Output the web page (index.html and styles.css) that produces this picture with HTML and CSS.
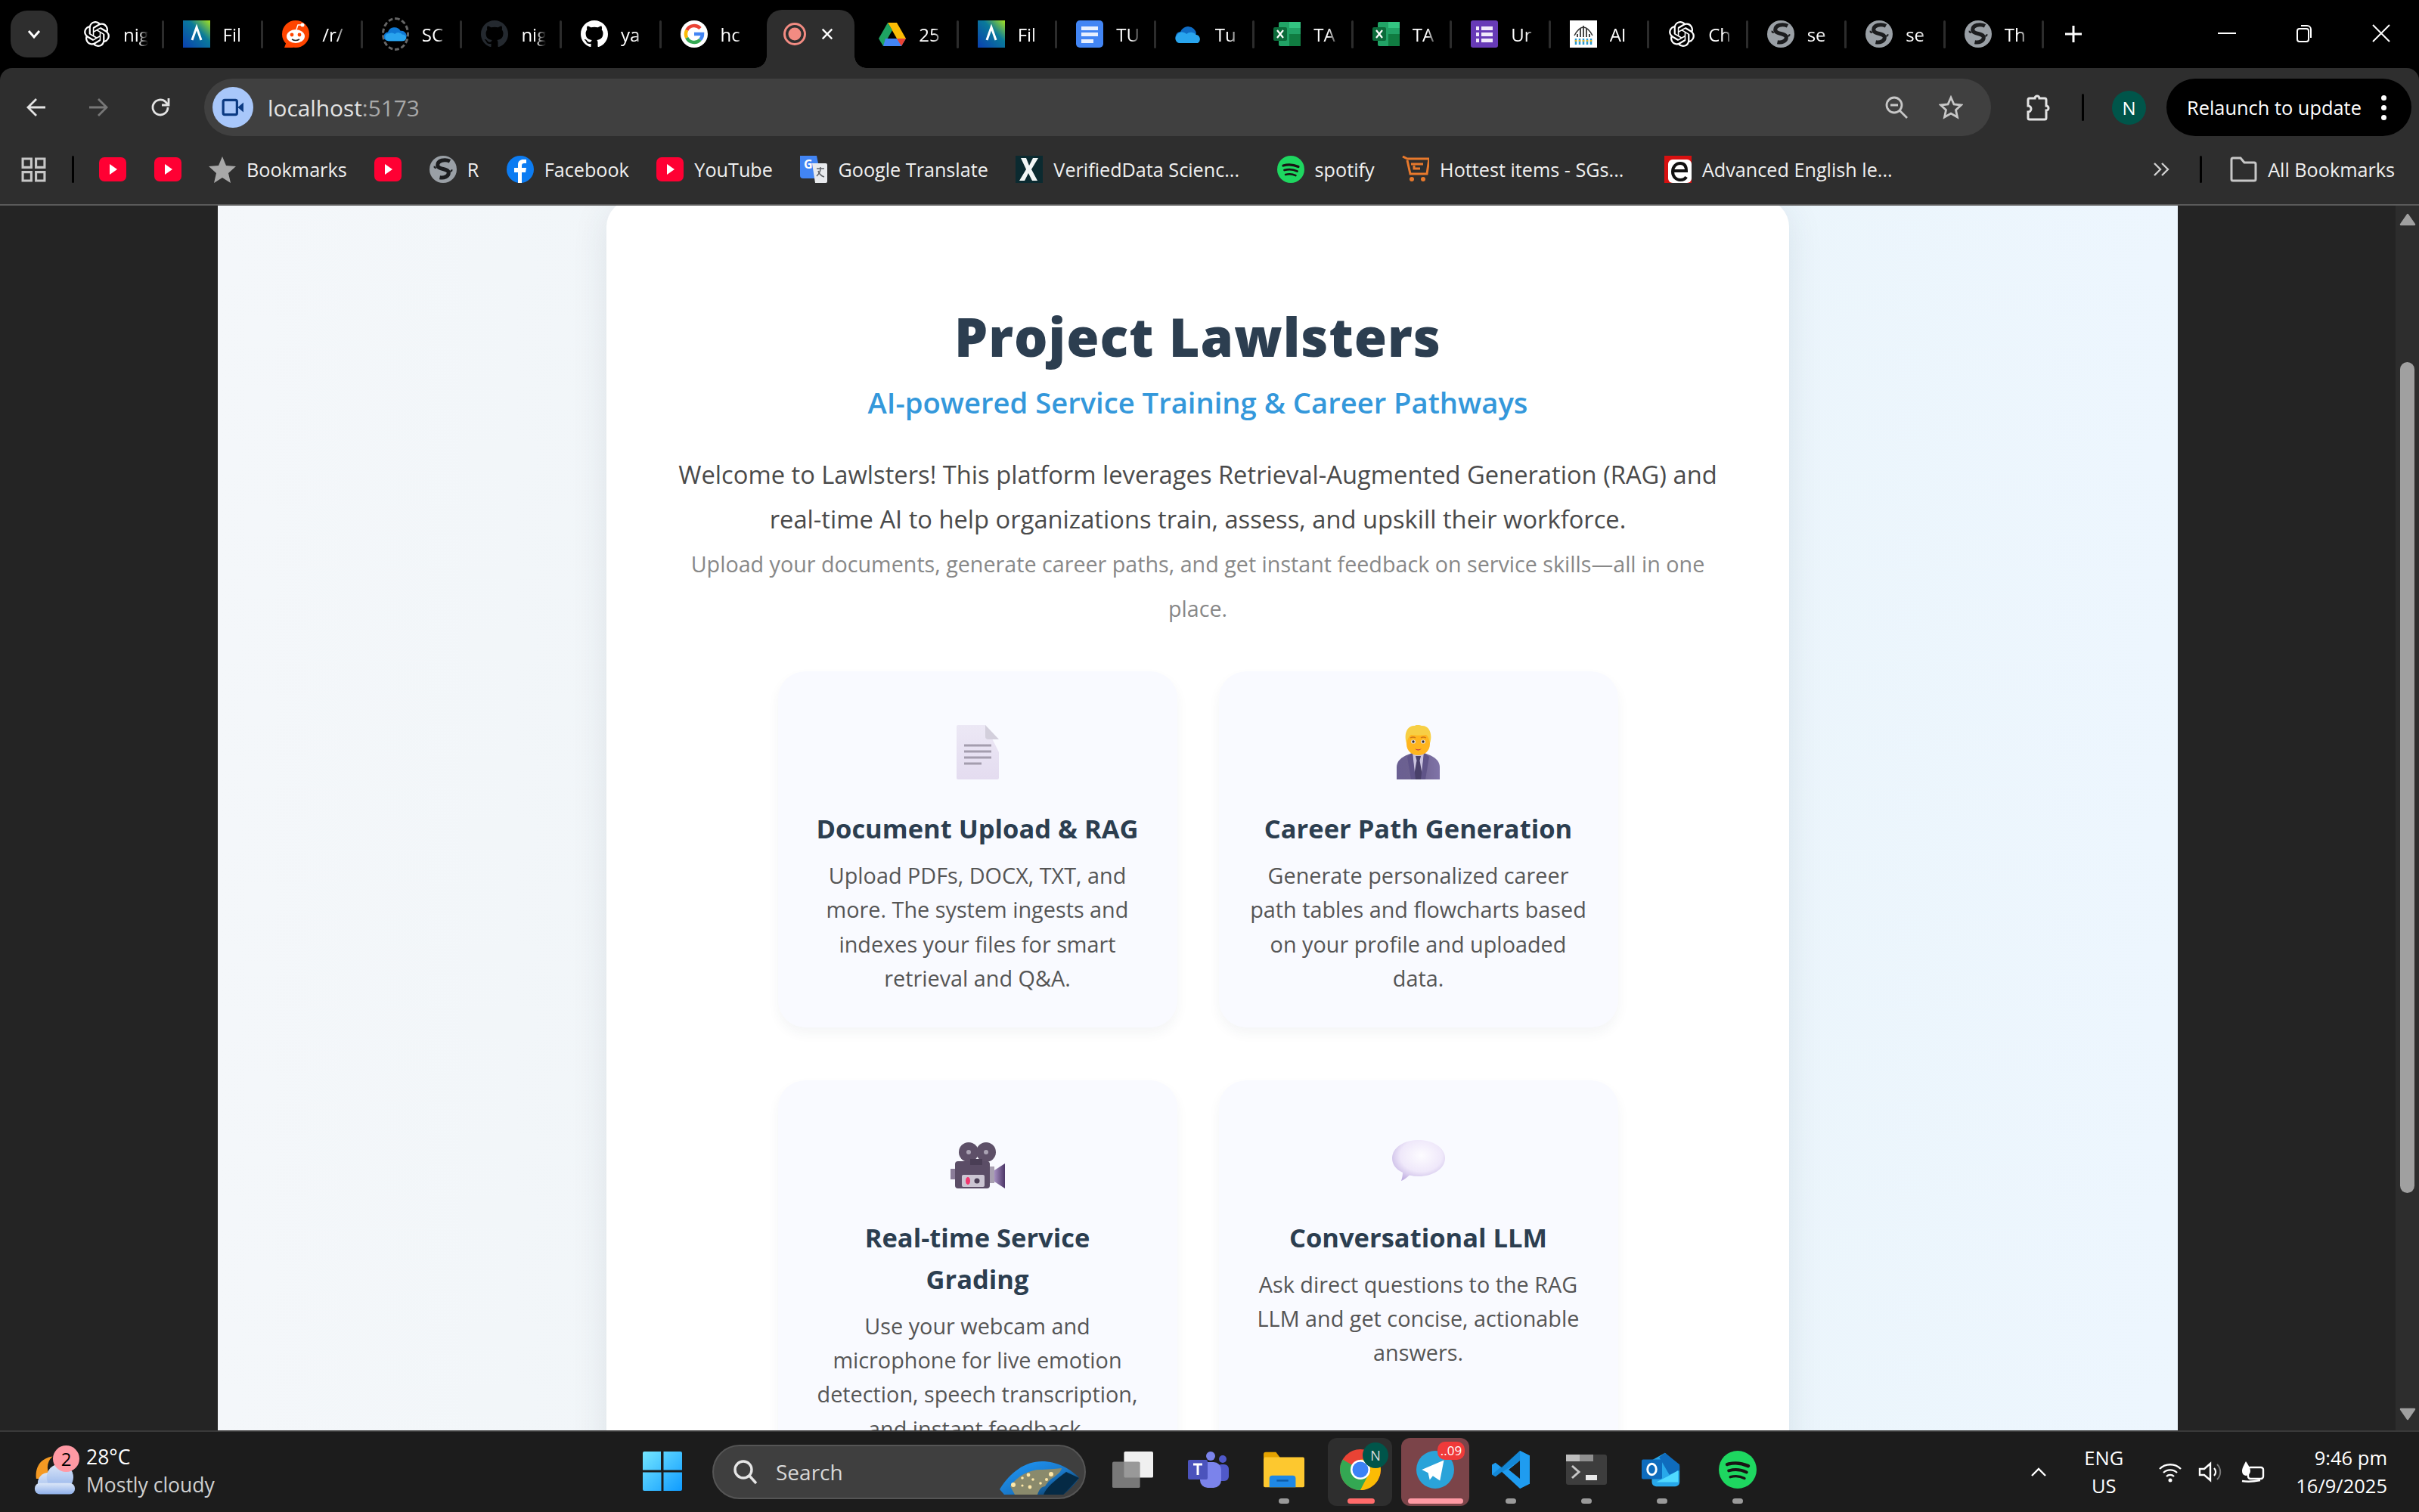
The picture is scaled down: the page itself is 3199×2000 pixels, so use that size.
FILE: index.html
```html
<!DOCTYPE html>
<html lang="en">
<head>
<meta charset="utf-8">
<title>Project Lawlsters</title>
<link rel="stylesheet" href="styles.css">
</head>
<body>
<svg class="defs" width="0" height="0" aria-hidden="true">
  <defs>
    <linearGradient id="gLov" x1="0" y1="1" x2="1" y2="0"><stop offset="0" stop-color="#0a3fb0"/><stop offset=".6" stop-color="#0a7a9a"/><stop offset="1" stop-color="#a6e21e"/></linearGradient>
    <linearGradient id="gWin" x1="0" y1="0" x2="1" y2="1"><stop offset="0" stop-color="#74e6ff"/><stop offset="1" stop-color="#0f9bff"/></linearGradient>
    <linearGradient id="gDoc" x1="0" y1="0" x2="0" y2="1"><stop offset="0" stop-color="#ece8f5"/><stop offset="1" stop-color="#e4dcf0"/></linearGradient>
    <linearGradient id="gSuit" x1="0" y1="0" x2="1" y2="0"><stop offset="0" stop-color="#6a5f92"/><stop offset=".5" stop-color="#6d628f"/><stop offset="1" stop-color="#8074a8"/></linearGradient>
    <linearGradient id="gLens" x1="0" y1="0" x2="1" y2="0"><stop offset="0" stop-color="#a58fc0"/><stop offset="1" stop-color="#4d3668"/></linearGradient>
    <radialGradient id="gBub" cx=".55" cy=".38" r=".66"><stop offset="0" stop-color="#fdfcff"/><stop offset=".6" stop-color="#efe8fa"/><stop offset="1" stop-color="#c2b1e2"/></radialGradient>
    <linearGradient id="gCloud" x1="0" y1="0" x2="0" y2="1"><stop offset="0" stop-color="#dbe6f8"/><stop offset="1" stop-color="#8fb0ea"/></linearGradient>
    <linearGradient id="gEarth" x1="0" y1="0" x2="1" y2="1"><stop offset="0" stop-color="#1f9bff"/><stop offset=".55" stop-color="#1a78c8"/><stop offset="1" stop-color="#06263f"/></linearGradient>
    <symbol id="i-knot" viewBox="0 0 24 24"><path fill="#fff" d="M22.2819 9.8211a5.9847 5.9847 0 0 0-.5157-4.9108 6.0462 6.0462 0 0 0-6.5098-2.9A6.0651 6.0651 0 0 0 4.9807 4.1818a5.9847 5.9847 0 0 0-3.9977 2.9 6.0462 6.0462 0 0 0 .7427 7.0966 5.98 5.98 0 0 0 .511 4.9107 6.051 6.051 0 0 0 6.5146 2.9001A5.9847 5.9847 0 0 0 13.2599 24a6.0557 6.0557 0 0 0 5.7718-4.2058 5.9894 5.9894 0 0 0 3.9977-2.9001 6.0557 6.0557 0 0 0-.7475-7.0729zm-9.022 12.6081a4.4755 4.4755 0 0 1-2.8764-1.0408l.1419-.0804 4.7783-2.7582a.7948.7948 0 0 0 .3927-.6813v-6.7369l2.02 1.1686a.071.071 0 0 1 .038.052v5.5826a4.504 4.504 0 0 1-4.4945 4.4944zm-9.6607-4.1254a4.4708 4.4708 0 0 1-.5346-3.0137l.142.0852 4.783 2.7582a.7712.7712 0 0 0 .7806 0l5.8428-3.3685v2.3324a.0804.0804 0 0 1-.0332.0615L9.74 19.9502a4.4992 4.4992 0 0 1-6.1408-1.6464zM2.3408 7.8956a4.485 4.485 0 0 1 2.3655-1.9728V11.6a.7664.7664 0 0 0 .3879.6765l5.8144 3.3543-2.0201 1.1685a.0757.0757 0 0 1-.071 0l-4.8303-2.7865A4.504 4.504 0 0 1 2.3408 7.872zm16.5963 3.8558L13.1038 8.364 15.1192 7.2a.0757.0757 0 0 1 .071 0l4.8303 2.7913a4.4944 4.4944 0 0 1-.6765 8.1042v-5.6772a.79.79 0 0 0-.407-.667zm2.0107-3.0231l-.142-.0852-4.7735-2.7818a.7759.7759 0 0 0-.7854 0L9.409 9.2297V6.8974a.0662.0662 0 0 1 .0284-.0615l4.8303-2.7866a4.4992 4.4992 0 0 1 6.6802 4.66zM8.3065 12.863l-2.02-1.1638a.0804.0804 0 0 1-.038-.0567V6.0742a4.4992 4.4992 0 0 1 7.3757-3.4537l-.142.0805L8.704 5.459a.7948.7948 0 0 0-.3927.6813zm1.0976-2.3654l2.602-1.4998 2.6069 1.4998v2.9994l-2.5974 1.4997-2.6067-1.4997Z"/></symbol>
    <symbol id="i-lov" viewBox="0 0 36 36"><rect width="36" height="36" fill="url(#gLov)"/><path d="M12 26 18 9l6 17" fill="none" stroke="#fff" stroke-width="3"/></symbol>
    <symbol id="i-reddit" viewBox="0 0 36 36"><circle cx="18" cy="18" r="18" fill="#ff4500"/><path d="M3 36h12L6 28z" fill="#ff4500"/><ellipse cx="18" cy="21" rx="12" ry="9" fill="#fff"/><circle cx="13" cy="19" r="2.4" fill="#ff4500"/><circle cx="23" cy="19" r="2.4" fill="#ff4500"/><path d="M13 25q5 3 10 0" stroke="#222" stroke-width="1.5" fill="none"/><circle cx="27" cy="6" r="2.5" fill="#fff"/><path d="M19 12l2-6 6 0" stroke="#fff" stroke-width="1.5" fill="none"/></symbol>
    <symbol id="i-od" viewBox="0 0 36 24"><path d="M7 23a7 7 0 0 1-1-14A11 11 0 0 1 26 7a8 8 0 0 1 3 16z" fill="#0f78d4"/><path d="M7 23a6 6 0 0 1 1-12 10 10 0 0 1 9 1 8 8 0 0 1 12 1 5 5 0 0 1 6 5 5 5 0 0 1-5 5z" fill="#2aa4ee"/></symbol>
    <symbol id="i-gh" viewBox="0 0 16 16"><path fill="currentColor" d="M8 0C3.58 0 0 3.58 0 8c0 3.54 2.29 6.53 5.47 7.59.4.07.55-.17.55-.38 0-.19-.01-.82-.01-1.49-2.01.37-2.53-.49-2.69-.94-.09-.23-.48-.94-.82-1.13-.28-.15-.68-.52-.01-.53.63-.01 1.08.58 1.23.82.72 1.21 1.87.87 2.33.66.07-.52.28-.87.51-1.07-1.78-.2-3.64-.89-3.64-3.95 0-.87.31-1.59.82-2.15-.08-.2-.36-1.02.08-2.12 0 0 .67-.21 2.2.82.64-.18 1.32-.27 2-.27.68 0 1.36.09 2 .27 1.53-1.04 2.2-.82 2.2-.82.44 1.1.16 1.92.08 2.12.51.56.82 1.27.82 2.15 0 3.07-1.87 3.75-3.65 3.95.29.25.54.73.54 1.48 0 1.07-.01 1.93-.01 2.2 0 .21.15.46.55.38A8.013 8.013 0 0016 8c0-4.42-3.58-8-8-8z"/></symbol>
    <symbol id="i-g" viewBox="0 0 36 36"><circle cx="18" cy="18" r="18" fill="#fff"/><path d="M26 10.5A11 11 0 0 0 8.200 13" fill="none" stroke="#ea4335" stroke-width="4.500"/><path d="M8.200 13a11 11 0 0 0 0 10" fill="none" stroke="#fbbc05" stroke-width="4.500"/><path d="M8.200 23A11 11 0 0 0 26 25.500" fill="none" stroke="#34a853" stroke-width="4.500"/><path d="M18 18h11a11 11 0 0 1-3 7.500" fill="none" stroke="#4285f4" stroke-width="4.500"/></symbol>
    <symbol id="i-rec" viewBox="0 0 32 32"><circle cx="16" cy="16" r="13.500" fill="none" stroke="#f28b82" stroke-width="3"/><circle cx="16" cy="16" r="8.500" fill="#f28b82"/></symbol>
    <symbol id="i-drive" viewBox="0 0 36 32"><path d="M12 1h12l12 21H24z" fill="#fbbc04"/><path d="M12 1 0 22l6 10 12-21z" fill="#1ea362"/><path d="M9 22h27l-6 10H6z" fill="#4285f4"/><path d="M24 22h12l-6 10z" fill="#ea4335"/></symbol>
    <symbol id="i-docs" viewBox="0 0 36 36"><rect width="36" height="36" rx="5" fill="#4285f4"/><path d="M7 8h22v5H7zM7 16h22v5H7zM7 25h16v5H7z" fill="#e8f0fe"/></symbol>
    <symbol id="i-od2" viewBox="0 0 36 24"><path d="M4 22a7 7 0 0 1 3-13A11 11 0 0 1 28 11l-6 11z" fill="#0f6cc4"/><path d="M6 24a6 6 0 0 1-4-10 8 8 0 0 1 13-2 9 9 0 0 1 13 1 6 6 0 0 1 2 11z" fill="#29a5ee"/></symbol>
    <symbol id="i-xl" viewBox="0 0 36 32"><rect x="7" width="29" height="32" rx="2" fill="#21a366"/><rect x="21" width="15" height="8" fill="#33c481"/><rect x="21" y="16" width="15" height="16" fill="#107c41"/><rect y="7" width="18" height="18" rx="2" fill="#0b6b3a"/><path d="M5 11l8 10M13 11l-8 10" stroke="#fff" stroke-width="2.200"/></symbol>
    <symbol id="i-forms" viewBox="0 0 36 36"><rect width="36" height="36" rx="3" fill="#673ab7"/><path d="M7 8h4v5H7zM14 8h15v5H14zM7 16h4v5H7zM14 16h15v5H14zM7 24h4v5H7zM14 24h15v5H14z" fill="#f0e9fa"/></symbol>
    <symbol id="i-ab" viewBox="0 0 36 36"><rect width="36" height="36" fill="#fff"/><path d="M6 20Q18-2 30 20" fill="none" stroke="#333" stroke-width="1.500"/><path d="M10 18v4M14 11v11M18 7v15M22 11v11M26 18v4" stroke="#333" stroke-width="1.800"/><path d="M8 24v8M13 24v8M18 24v8M23 24v8M28 24v8" stroke="#2a9ad0" stroke-width="2.500"/><path d="M8 26v2M13 26v2M18 26v2M23 26v2M28 26v2" stroke="#e6b422" stroke-width="2.500"/></symbol>
    <symbol id="i-globe" viewBox="0 0 32 32"><circle cx="16" cy="16" r="16" fill="#9aa0a6"/><path d="M24 6.500C18 3.500 9.500 5.500 9.500 11c0 5.500 13 3.500 13 9 0 4.500-5.500 6.500-10.500 5.500" fill="none" stroke="#1c1d1f" stroke-width="4.500"/><path d="M5 13c1 0 2 1 2 2M27 17c-1 0-2 1-2 2" fill="none" stroke="#1c1d1f" stroke-width="2"/></symbol>
    <symbol id="i-yt" viewBox="0 0 36 36"><rect y="2" width="36" height="32" rx="7" fill="#ff0033"/><path d="M14 11l10 7-10 7z" fill="#fff"/></symbol>
    <symbol id="i-spot" viewBox="0 0 36 36"><circle cx="18" cy="18" r="18" fill="#1ed760"/><g fill="none" stroke="#191414" stroke-linecap="round"><path d="M8 13q10-3 20 1.500" stroke-width="3.200"/><path d="M9.500 19q9-2.500 17 1.500" stroke-width="2.800"/><path d="M11 25q7-2 13.500 1.200" stroke-width="2.400"/></g></symbol>
  </defs>
</svg>

<div class="app">
  <header class="tabstrip">
    <div class="tab-menu"><svg class="ic-14" viewBox="0 0 20 14"><path d="M3 3l7 8 7-8" fill="none" stroke="#fff" stroke-width="3"/></svg></div>
    <div class="tabs-left">
      <div class="tab"><svg class="ti ti-k"><use href="#i-knot"/></svg><span class="tl">nig</span></div>
      <div class="tab"><svg class="ti"><use href="#i-lov"/></svg><span class="tl">Fil</span></div>
      <div class="tab"><svg class="ti"><use href="#i-reddit"/></svg><span class="tl">/r/</span></div>
      <div class="tab"><span class="spin"><svg class="spin-in"><use href="#i-od"/></svg></span><span class="tl">SC</span></div>
      <div class="tab"><svg class="ti gh-dark"><use href="#i-gh"/></svg><span class="tl">nig</span></div>
      <div class="tab"><svg class="ti gh-light"><use href="#i-gh"/></svg><span class="tl">ya</span></div>
      <div class="tab tab-nosep"><svg class="ti"><use href="#i-g"/></svg><span class="tl">hc</span></div>
    </div>
    <div class="tab-active"><svg class="ti-a"><use href="#i-rec"/></svg><svg class="tx" viewBox="0 0 20 20"><path d="M3 3l14 14M17 3 3 17" stroke="#fff" stroke-width="2.600"/></svg></div>
    <div class="tabs-right">
      <div class="tab"><svg class="ti"><use href="#i-drive"/></svg><span class="tl">25</span></div>
      <div class="tab"><svg class="ti"><use href="#i-lov"/></svg><span class="tl">Fil</span></div>
      <div class="tab"><svg class="ti"><use href="#i-docs"/></svg><span class="tl">TU</span></div>
      <div class="tab"><svg class="ti"><use href="#i-od2"/></svg><span class="tl">Tu</span></div>
      <div class="tab"><svg class="ti"><use href="#i-xl"/></svg><span class="tl">TA</span></div>
      <div class="tab"><svg class="ti"><use href="#i-xl"/></svg><span class="tl">TA</span></div>
      <div class="tab"><svg class="ti"><use href="#i-forms"/></svg><span class="tl">Ur</span></div>
      <div class="tab"><svg class="ti"><use href="#i-ab"/></svg><span class="tl">AI</span></div>
      <div class="tab"><svg class="ti ti-k"><use href="#i-knot"/></svg><span class="tl">Ch</span></div>
      <div class="tab"><svg class="ti"><use href="#i-globe"/></svg><span class="tl">se</span></div>
      <div class="tab"><svg class="ti"><use href="#i-globe"/></svg><span class="tl">se</span></div>
      <div class="tab"><svg class="ti"><use href="#i-globe"/></svg><span class="tl">Th</span></div>
    </div>
    <svg class="newtab" viewBox="0 0 24 24"><path d="M12 1v22M1 12h22" stroke="#fff" stroke-width="3"/></svg>
    <div class="winctl">
      <svg class="wc" viewBox="0 0 24 24"><path d="M0 12h24" stroke="#fff" stroke-width="2"/></svg>
      <svg class="wc" viewBox="0 0 24 24"><rect x="3" y="6" width="15" height="17" rx="3" fill="none" stroke="#fff" stroke-width="2"/><path d="M8 2h8a5 5 0 0 1 5 5v11" fill="none" stroke="#fff" stroke-width="2"/></svg>
      <svg class="wc" viewBox="0 0 24 24"><path d="M1 1l22 22M23 1 1 23" stroke="#fff" stroke-width="2"/></svg>
    </div>
  </header>

  <nav class="toolbar">
    <svg class="tbi" viewBox="0 0 28 28"><path d="M26 14H4M14 3 3 14l11 11" fill="none" stroke="#e3e3e3" stroke-width="2.800"/></svg>
    <svg class="tbi dim" viewBox="0 0 28 28"><path d="M2 14h22M14 3l11 11-11 11" fill="none" stroke="#777" stroke-width="2.800"/></svg>
    <svg class="tbi" viewBox="0 0 28 28"><path d="M24 14a10 10 0 1 1-3-7.200L24 10" fill="none" stroke="#e3e3e3" stroke-width="2.800"/><path d="M25 2v9h-9" fill="none" stroke="#e3e3e3" stroke-width="2.800"/></svg>
    <div class="omnibox">
      <span class="chip"><svg class="chip-i" viewBox="0 0 28 24"><rect x="2" y="3" width="17" height="18" rx="2" fill="none" stroke="#0b3a82" stroke-width="3"/><path d="M20 12l7-6v12z" fill="#0b3a82"/></svg></span>
      <span class="url">localhost<span class="url-port">:5173</span></span>
      <svg class="omi zoomi" viewBox="0 0 32 32"><circle cx="13" cy="13" r="10" fill="none" stroke="#c7c7c7" stroke-width="2.800"/><path d="M8 13h10M20 20l10 10" stroke="#c7c7c7" stroke-width="2.800"/></svg>
      <svg class="omi stari" viewBox="0 0 32 32"><path d="M16 3l4 9 9.500 1-7 6.500 2 9.500-8.500-5-8.500 5 2-9.500-7-6.500L12 12z" fill="none" stroke="#c7c7c7" stroke-width="2.800"/></svg>
    </div>
    <svg class="ext" viewBox="0 0 34 36"><path d="M14 6a3 3 0 0 1 6 0h7a2 2 0 0 1 2 2v8a3 3 0 0 1 0 6v10a2 2 0 0 1-2 2H7a2 2 0 0 1-2-2V24a4 4 0 0 0 0-8V8a2 2 0 0 1 2-2z" fill="none" stroke="#e3e3e3" stroke-width="3"/></svg>
    <span class="tb-div"></span>
    <span class="avatar">N</span>
    <div class="relaunch"><span>Relaunch to update</span><span class="dots"><i></i><i></i><i></i></span></div>
  </nav>

  <nav class="bookmarks">
    <svg class="apps" viewBox="0 0 32 32"><path d="M2 2h11v11H2zM19 2h11v11H19zM2 19h11v11H2zM19 19h11v11H19z" fill="none" stroke="#c7c7c7" stroke-width="3"/></svg>
    <span class="bm-div"></span>
    <div class="bm-list">
      <a class="bm"><svg class="bi"><use href="#i-yt"/></svg></a>
      <a class="bm"><svg class="bi"><use href="#i-yt"/></svg></a>
      <a class="bm"><svg class="bi" viewBox="0 0 36 36"><path d="M18 1l5 12 13 1-10 9 3 13-11-7-11 7 3-13L0 14l13-1z" fill="#a8a8a8"/></svg><span>Bookmarks</span></a>
      <a class="bm"><svg class="bi"><use href="#i-yt"/></svg></a>
      <a class="bm"><svg class="bi"><use href="#i-globe"/></svg><span>R</span></a>
      <a class="bm"><svg class="bi" viewBox="0 0 36 36"><circle cx="18" cy="18" r="18" fill="#0c7cf2"/><path d="M15 36V22h-5v-6h5v-4c0-5 3-7 7-7h4v5h-3c-2 0-3 1-3 3v3h6l-1 6h-5v14z" fill="#fff"/></svg><span>Facebook</span></a>
      <a class="bm"><svg class="bi"><use href="#i-yt"/></svg><span>YouTube</span></a>
      <a class="bm"><svg class="bi" viewBox="0 0 36 36"><path d="M0 0h22l6 30H4a4 4 0 0 1-4-4z" fill="#4285f4"/><path d="M16 10h18a2 2 0 0 1 2 2v22a2 2 0 0 1-2 2H20z" fill="#e8eaed"/><path d="M22 17h10M27 15v2c0 5-3 8-5 10M24 20c1 4 5 7 8 8" stroke="#5f6368" stroke-width="1.500" fill="none"/><text class="gt" x="5" y="17">G</text></svg><span>Google Translate</span></a>
      <a class="bm"><svg class="bi" viewBox="0 0 36 36"><rect width="36" height="36" fill="#0b2a30"/><path d="M7 3h7l4 10 5-10h7l-9 15 8 15h-7l-5-10-5 10H5l9-15z" fill="#f2f6f6"/></svg><span>VerifiedData Scienc...</span></a>
      <a class="bm bm-wide"><svg class="bi"><use href="#i-spot"/></svg><span>spotify</span></a>
      <a class="bm"><svg class="bi" viewBox="0 0 36 36"><path d="M1 1l6 3h29l-3 20H11L7 6M12 11h16M24 17h-8v-4" fill="none" stroke="#e8792c" stroke-width="3"/><circle cx="13" cy="31" r="3" fill="#e8792c"/><circle cx="28" cy="31" r="3" fill="#e8792c"/></svg><span>Hottest items - SGs...</span></a>
      <a class="bm bm-wide2"><svg class="bi" viewBox="0 0 36 36"><rect width="36" height="36" fill="#d81010"/><rect x="5" y="5" width="31" height="31" rx="6" fill="#fff"/><path d="M11 20h18c0-7-3-10-8-10s-10 4-10 11 5 11 10 11 7-2 8-4" fill="none" stroke="#111" stroke-width="4"/></svg><span>Advanced English le...</span></a>
    </div>
    <svg class="more" viewBox="0 0 24 24"><path d="M3 4l8 8-8 8M13 4l8 8-8 8" fill="none" stroke="#d0d0d0" stroke-width="2.400"/></svg>
    <span class="bm-div bm-div2"></span>
    <a class="bm bm-all"><svg class="bi" viewBox="0 0 36 36"><path d="M2 5a2 2 0 0 1 2-2h10l5 6h13a2 2 0 0 1 2 2v20a2 2 0 0 1-2 2H4a2 2 0 0 1-2-2z" fill="none" stroke="#c7c7c7" stroke-width="3"/></svg><span>All Bookmarks</span></a>
  </nav>

  <div class="viewport">
    <div class="gutter"></div>
    <main class="page">
      <section class="panel">
        <h1 class="title">Project Lawlsters</h1>
        <h2 class="subtitle">AI-powered Service Training &amp; Career Pathways</h2>
        <p class="intro">Welcome to Lawlsters! This platform leverages Retrieval-Augmented Generation (RAG) and real-time AI to help organizations train, assess, and upskill their workforce.</p>
        <p class="intro-sm">Upload your documents, generate career paths, and get instant feedback on service skills—all in one place.</p>
        <div class="features">
          <article class="feature">
            <div class="emoji">
              <svg class="em-doc" viewBox="0 0 56 72"><path d="M2 0h36l18 36v34a2 2 0 0 1-2 2H2a2 2 0 0 1-2-2V2a2 2 0 0 1 2-2z" fill="url(#gDoc)"/><path d="M38 0l18 19H42a4 4 0 0 1-4-4z" fill="#d3cfdc"/><path d="M10 27h36M10 35h36M10 43h36M10 51h23" stroke="#a49dae" stroke-width="3"/></svg>
            </div>
            <h3 class="feature-h">Document Upload &amp; RAG</h3>
            <p class="feature-p">Upload PDFs, DOCX, TXT, and more. The system ingests and indexes your files for smart retrieval and Q&amp;A.</p>
          </article>
          <article class="feature">
            <div class="emoji">
              <svg class="em-person" viewBox="0 0 57 72"><path d="M0 72V56C0 45 11 40 21 37h15c10 3 21 8 21 19v16z" fill="url(#gSuit)"/><path d="M21 37h15l-3 35H24z" fill="#c9c3de"/><path d="M25 41h7l-1.500 6 4.500 25H22l4.500-25z" fill="#49406a"/><path d="M14 42l7-5 4 35h-6zM43 42l-7-5-4 35h6z" fill="#5f5488"/><path d="M13 15c0-8 7-13 15.500-13S44 7 44 15v10c0 9-7 15-15.500 15S13 34 13 25z" fill="#ffb51f"/><path d="M13 24C9 12 14 0 24 1c3-2 7-1 9 0 10-1 15 11 11 23-1-4-2-9-5-11-6 1-14 1-20 0-3 2-5 7-6 11z" fill="#f7cf45"/><ellipse cx="22" cy="22" rx="3" ry="2.600" fill="#e9e4e0"/><ellipse cx="35" cy="22" rx="3" ry="2.600" fill="#e9e4e0"/><circle cx="22" cy="22" r="1.700" fill="#3a2b2b"/><circle cx="35" cy="22" r="1.700" fill="#3a2b2b"/><path d="M24 31q4.500 3 9 0q-4.500 5-9 0" fill="#b3124f"/><path d="M18 17q4-2 7 0M32 17q3-2 7 0" stroke="#d0761a" stroke-width="1.300" fill="none"/></svg>
            </div>
            <h3 class="feature-h">Career Path Generation</h3>
            <p class="feature-p">Generate personalized career path tables and flowcharts based on your profile and uploaded data.</p>
          </article>
          <article class="feature">
            <div class="emoji">
              <svg class="em-cam" viewBox="0 0 72 62"><circle cx="24" cy="14" r="13" fill="#5e5068"/><circle cx="24" cy="14" r="3" fill="#aaa3b3"/><circle cx="47" cy="14" r="13" fill="#5e5068"/><circle cx="47" cy="14" r="3" fill="#aaa3b3"/><path d="M0 36h6v14H0z" fill="#8a7c98"/><rect x="6" y="26" width="46" height="36" rx="4" fill="#5b4d66"/><rect x="26" y="23" width="16" height="8" fill="#4a3e55"/><rect x="52" y="33" width="6" height="22" fill="#a79fb0"/><path d="M58 38l14-9v33l-14-9z" fill="url(#gLens)"/><rect x="15" y="44" width="30" height="16" rx="2" fill="#cbc5d2"/><ellipse cx="23" cy="52" rx="3" ry="5" fill="#f2366e"/><circle cx="35" cy="52" r="3.500" fill="#4a3e55"/></svg>
            </div>
            <h3 class="feature-h">Real-time Service<br>Grading</h3>
            <p class="feature-p">Use your webcam and microphone for live emotion detection, speech transcription, and instant feedback.</p>
          </article>
          <article class="feature">
            <div class="emoji">
              <svg class="em-bub" viewBox="0 0 70 54"><path d="M35 0c19 0 35 10 35 24S54 48 35 48c-4 0-8-.5-12-1.500C19 50 15 53 12 54c1-3 2-7 2-11C5 39 0 32 0 24 0 10 16 0 35 0z" fill="url(#gBub)"/></svg>
            </div>
            <h3 class="feature-h">Conversational LLM</h3>
            <p class="feature-p">Ask direct questions to the RAG LLM and get concise, actionable answers.</p>
          </article>
        </div>
      </section>
    </main>
    <div class="gutter"></div>
    <aside class="scrollbar">
      <svg class="sb-arrow" viewBox="0 0 22 17"><path d="M11 2 20 15H2z" fill="#a0a0a0" stroke="#a0a0a0" stroke-width="2.500" stroke-linejoin="round"/></svg>
      <div class="sb-thumb"></div>
      <svg class="sb-arrow sb-down" viewBox="0 0 22 17"><path d="M11 15 20 2H2z" fill="#a0a0a0" stroke="#a0a0a0" stroke-width="2.500" stroke-linejoin="round"/></svg>
    </aside>
  </div>

  <footer class="taskbar">
    <div class="weather">
      <div class="w-icon">
        <svg class="w-svg" viewBox="0 0 56 52"><path d="M26 0a20 20 0 0 0 0 30H4C2 12 12 2 26 0z" fill="#f59a23"/><circle cx="20" cy="36" r="14" fill="url(#gCloud)"/><circle cx="36" cy="28" r="18" fill="url(#gCloud)"/><rect x="2" y="36" width="54" height="15" rx="7" fill="url(#gCloud)"/></svg>
        <span class="w-badge">2</span>
      </div>
      <div class="w-text"><span class="w-temp">28°C</span><span class="w-desc">Mostly cloudy</span></div>
    </div>
    <div class="tile tile-start"><svg class="win" viewBox="0 0 52 52"><path d="M0 2a2 2 0 0 1 2-2h22v24.500H0zM27.500 0H50a2 2 0 0 1 2 2v22.500H27.500zM0 27.500h24.500V52H2a2 2 0 0 1-2-2zM27.500 27.500H52V50a2 2 0 0 1-2 2H27.500z" fill="url(#gWin)"/></svg></div>
    <div class="search">
      <svg class="s-mag" viewBox="0 0 34 34"><circle cx="15" cy="14" r="11" fill="none" stroke="#e6e6e6" stroke-width="3.400"/><path d="M23 22l9 10" stroke="#e6e6e6" stroke-width="3.400"/></svg>
      <span class="s-text">Search</span>
      <svg class="s-earth" viewBox="0 0 106 44"><path d="M0 37C14 14 34 0 56 0c20 0 38 10 49 22-5 8-13 16-21 22H6z" fill="url(#gEarth)"/><path d="M58 44C62 34 72 26 88 14l17 8-21 22z" fill="#052a45"/><path d="M14 33C24 18 42 10 56 11c12-1 20-1 26-2-1 6-6 8-10 12-5 2-8 6-12 12-6 1-8 5-10 11H20z" fill="#8a8a6c"/><g fill="#ffe8a8"><circle cx="18" cy="31" r="3"/><circle cx="30" cy="22" r="1.800"/><circle cx="38" cy="18" r="2.400"/><circle cx="44" cy="24" r="1.800"/><circle cx="54" cy="29" r="1.800"/><circle cx="68" cy="17" r="3"/><circle cx="62" cy="24" r="2"/><circle cx="40" cy="34" r="2.400"/><circle cx="30" cy="32" r="1.600"/></g></svg>
    </div>
    <div class="tiles">
      <div class="tile"><svg class="t-i" viewBox="0 0 56 50"><rect x="16" width="40" height="36" rx="2" fill="#f0f0f0"/><rect y="14" width="38" height="36" rx="2" fill="#8a8a8a" opacity=".85"/></svg></div>
      <div class="tile"><svg class="t-i" viewBox="0 0 54 48"><circle cx="30" cy="6" r="6" fill="#7b83eb"/><circle cx="46" cy="10" r="5" fill="#5059c9"/><rect x="38" y="17" width="16" height="22" rx="6" fill="#5059c9"/><rect x="16" y="14" width="28" height="34" rx="10" fill="#7b83eb"/><rect y="11" width="26" height="26" rx="2" fill="#4b53bc"/><path d="M7 17h12M13 17v14" stroke="#fff" stroke-width="3"/></svg></div>
      <div class="tile"><svg class="t-i" viewBox="0 0 56 48"><path d="M0 3a3 3 0 0 1 3-3h14l6 8h-23z" fill="#e5a300"/><rect y="7" width="56" height="41" rx="2" fill="#fdc82f"/><path d="M12 32h28a4 4 0 0 1 4 4v12H8V36a4 4 0 0 1 4-4z" fill="#1e88e5"/><path d="M18 39h16" stroke="#0c5aa6" stroke-width="2.500"/></svg><span class="t-dot"></span></div>
      <div class="tile tile-chrome"><svg class="t-i t-chrome" viewBox="0 0 54 54"><circle cx="27" cy="27" r="27" fill="#ea4335"/><path d="M27 27 3.600 13.500A27 27 0 0 0 27 54l13.500-23.400z" fill="#34a853"/><path d="M27 13.500h23.400A27 27 0 0 1 27 54l13.500-26z" fill="#fbbc04"/><circle cx="27" cy="27" r="13" fill="#fff"/><circle cx="27" cy="27" r="10.500" fill="#3b82f6"/></svg><span class="t-n">N</span><span class="t-ind"></span></div>
      <div class="tile tile-tg"><svg class="t-i" viewBox="0 0 50 48"><circle cx="25" cy="24" r="24" fill="#2aa3d9"/><path d="M8 24 36 12l-5 26-9-6-4 5-2-9z" fill="#fff"/></svg><span class="t-badge">..09</span><span class="t-ind"></span></div>
      <div class="tile"><svg class="t-i" viewBox="0 0 54 54"><path d="M40 0l14 7v40l-14 7L14 30 5 37 0 34V20l5-3 9 7zM40 14 24 27l16 13z" fill="#1f9cf0"/><path d="M40 0l14 7v40l-14 7V14z" fill="#1f9cf0"/><path d="M40 0v14L5 37 0 34z" fill="#0065a9" opacity=".35"/></svg><span class="t-dot"></span></div>
      <div class="tile"><svg class="t-i" viewBox="0 0 54 40"><rect width="54" height="40" rx="3" fill="#3d3d3d"/><rect width="18" height="9" fill="#bdbdbd"/><rect x="18" width="18" height="9" fill="#8f8f8f"/><path d="M8 15l9 8-9 8" fill="none" stroke="#c6c6c6" stroke-width="3"/><rect x="26" y="27" width="15" height="7" fill="#e8e8e8"/></svg><span class="t-dot"></span></div>
      <div class="tile"><svg class="t-i" viewBox="0 0 56 46"><path d="M14 10 32 0l20 18v22a6 6 0 0 1-6 6H20a6 6 0 0 1-6-6z" fill="#28a8ea"/><path d="M24 6l8-6 20 16v8L38 30z" fill="#0f6cbd"/><path d="M20 40h30V24l-14 8z" fill="#50d9ff"/><rect y="9" width="28" height="27" rx="2" fill="#0f6cbd"/><ellipse cx="14" cy="22.500" rx="6" ry="7.500" fill="none" stroke="#fff" stroke-width="3"/></svg><span class="t-dot"></span></div>
      <div class="tile"><svg class="t-i" viewBox="0 0 52 52"><use href="#i-spot"/></svg><span class="t-dot"></span></div>
    </div>
    <div class="tray">
      <svg class="caret" viewBox="0 0 24 14"><path d="M3 12 12 3l9 9" fill="none" stroke="#fff" stroke-width="2.400"/></svg>
      <div class="lang"><span>ENG</span><span>US</span></div>
      <div class="tray-icons">
        <svg class="tr-i" viewBox="0 0 32 32"><g fill="none" stroke="#fff" stroke-width="2.400"><path d="M2 12a20 20 0 0 1 28 0M7 17a13 13 0 0 1 18 0M11 22a7 7 0 0 1 10 0"/></g><circle cx="16" cy="27" r="2.500" fill="#fff"/></svg>
        <svg class="tr-i" viewBox="0 0 32 32"><path d="M3 12h6l8-7v22l-8-7H3z" fill="none" stroke="#fff" stroke-width="2.400"/><path d="M22 11a7 7 0 0 1 0 10" fill="none" stroke="#fff" stroke-width="2.200"/><path d="M26 6a14 14 0 0 1 0 20" fill="none" stroke="#777" stroke-width="2"/></svg>
        <svg class="tr-i tr-batt" viewBox="0 0 32 32"><rect x="10" y="10" width="20" height="15" rx="3" fill="none" stroke="#fff" stroke-width="2.400"/><path d="M7 2c4 6 6 9 6 13a6 6 0 0 1-6 6 6 6 0 0 1-5-6c0-4 2-7 5-13z" fill="#fff"/><path d="M2 28q10 2 24-1" stroke="#fff" stroke-width="2.400" fill="none"/></svg>
      </div>
      <div class="clock"><span>9:46 pm</span><span>16/9/2025</span></div>
    </div>
  </footer>
</div>
</body>
</html>
```
FILE: styles.css
```css
* { box-sizing: border-box; }
html, body { margin: 0; padding: 0; width: 3199px; height: 2000px; overflow: hidden; background: #000; }
body { font-family: "Open Sans", "Liberation Sans", sans-serif; color: #fff; }
.defs { position: absolute; }
p, h1, h2, h3 { margin: 0; }

.app { display: flex; flex-direction: column; width: 3199px; height: 2000px; }

/* tab strip */
.tabstrip { display: flex; align-items: stretch; height: 90px; flex: none; background: #000; padding-left: 14px; }
.tab-menu { width: 62px; height: 62px; margin-top: 14px; border-radius: 22px; background: #2e2e2e; display: flex; align-items: center; justify-content: center; flex: none; }
.ic-14 { width: 20px; height: 14px; }
.tabs-left { display: flex; margin-left: 9px; }
.tabs-right { display: flex; margin-left: 7px; }
.tab { position: relative; width: 131.6px; height: 64px; margin-top: 13px; padding-left: 25px; display: flex; align-items: center; gap: 17px; flex: none; }
.tabs-right .tab { width: 130.5px; }
.tab::after { content: ""; position: absolute; right: 0; top: 14px; height: 37px; width: 3px; border-radius: 2px; background: #2c2c2c; }
.tab-nosep::after { display: none; }
.ti { width: 36px; height: 36px; flex: none; }
.ti-k { width: 34px; height: 34px; margin: 0 1px; }
.gh-dark { color: #24292f; }
.gh-light { color: #fff; }
.tl { width: 40px; white-space: nowrap; font-size: 24px; color: #fff; -webkit-mask-image: linear-gradient(90deg, #000 50%, transparent 82%); mask-image: linear-gradient(90deg, #000 50%, transparent 82%); }
.spin { width: 36px; height: 44px; flex: none; border-radius: 50%; border: 3px dashed #666; display: flex; align-items: center; justify-content: center; }
.spin-in { width: 30px; height: 20px; }
.tab-active { position: relative; width: 116px; margin-left: 8px; margin-top: 13px; height: 77px; background: #2e2e2e; border-radius: 20px 20px 0 0; display: flex; align-items: flex-start; padding: 16px 0 0 21px; gap: 18px; flex: none; }
.tab-active::before, .tab-active::after { content: ""; position: absolute; bottom: 0; width: 16px; height: 16px; }
.tab-active::before { left: -16px; background: radial-gradient(circle at 0 0, transparent 15.500px, #2e2e2e 16px); }
.tab-active::after { right: -16px; background: radial-gradient(circle at 100% 0, transparent 15.500px, #2e2e2e 16px); }
.ti-a { width: 32px; height: 32px; }
.tx { width: 18px; height: 18px; margin-top: 7px; }
.newtab { width: 24px; height: 24px; margin: 33px 0 0 27px; flex: none; }
.winctl { display: flex; margin-left: auto; margin-right: 38px; gap: 78px; align-items: flex-start; padding-top: 32px; }
.wc { width: 24px; height: 24px; }

/* toolbar */
.toolbar { height: 90px; flex: none; background: #2e2e2e; border-radius: 16px 16px 0 0; display: flex; align-items: center; padding: 14px 11px 0 34px; }
.tbi { width: 28px; height: 28px; flex: none; margin-right: 54px; }
.omnibox { display: flex; align-items: center; height: 76px; width: 2363px; margin-left: -10px; border-radius: 38px; background: #404040; padding: 0 0 0 11px; flex: none; }
.chip { width: 54px; height: 54px; border-radius: 50%; background: #a8c7fa; display: flex; align-items: center; justify-content: center; flex: none; }
.chip-i { width: 30px; height: 26px; }
.url { margin-left: 19px; font-size: 29.800px; color: #e3e3e3; }
.url-port { color: #a8a8a8; }
.omi { width: 32px; height: 32px; flex: none; }
.zoomi { margin-left: auto; margin-right: 40px; }
.stari { margin-right: 37px; }
.ext { width: 34px; height: 36px; margin-left: 44px; flex: none; }
.tb-div { width: 3px; height: 36px; background: #000; border-radius: 2px; margin-left: 42px; flex: none; }
.avatar { width: 45px; height: 45px; border-radius: 50%; background: #00554a; margin-left: 37px; display: flex; align-items: center; justify-content: center; font-size: 24px; flex: none; }
.relaunch { margin-left: 27px; width: 324px; height: 76px; border-radius: 38px; background: #000; display: flex; align-items: center; padding-left: 27px; font-size: 25.400px; flex: none; white-space: nowrap; }
.dots { display: flex; flex-direction: column; gap: 6px; margin-left: 26px; }
.dots i { width: 7px; height: 7px; border-radius: 50%; background: #fff; }

/* bookmarks */
.bookmarks { height: 92px; flex: none; background: #2e2e2e; border-bottom: 2px solid #5a5a5a; display: flex; align-items: center; padding: 0 0 2px 28px; }
.apps { width: 33px; height: 33px; flex: none; }
.bm-div { width: 3px; height: 36px; background: #000; border-radius: 2px; margin-left: 34px; flex: none; }
.bm-list { display: flex; align-items: center; gap: 36.500px; margin-left: 33px; }
.bm { display: flex; align-items: center; gap: 14px; font-size: 25.200px; color: #f0f0f0; white-space: nowrap; flex: none; }
.bm-wide { margin-left: 13px; }
.bm-wide2 { margin-left: 17px; }
.bi { width: 36px; height: 36px; flex: none; }
.gt { font: 700 16px "Open Sans", sans-serif; fill: #fff; }
.more { width: 24px; height: 24px; margin-left: auto; flex: none; }
.bm-div2 { margin-left: 39px; }
.bm-all { margin-left: 37px; margin-right: 32px; }

/* viewport */
.viewport { flex: 1; min-height: 0; display: flex; overflow: hidden; }
.gutter { width: 288px; flex: none; background: #242424; }
.page { width: 2592px; flex: none; overflow: hidden; background: linear-gradient(90deg, #f4f7fa 0%, #f0f5f8 30%, #ebf5fb 75%, #edf6fe 100%); }
.scrollbar { width: 31px; flex: none; background: #2d2d2d; display: flex; flex-direction: column; align-items: center; padding-top: 10px; }
.sb-arrow { width: 22px; height: 17px; flex: none; }
.sb-thumb { width: 19px; height: 1099px; margin-top: 180px; border-radius: 10px; background: #a0a0a0; flex: none; }
.sb-down { margin-top: 284px; }

.panel { width: 1564px; margin: -8px auto 0; padding-top: 141px; background: #fff; border-radius: 36px; box-shadow: 0 8px 48px rgba(44, 62, 80, .1); text-align: center; min-height: 2200px; }
.title { font-size: 70px; line-height: 80px; font-weight: 800; color: #2c3e50; letter-spacing: 1px; }
.subtitle { margin-top: 19px; font-size: 38.200px; line-height: 56px; font-weight: 600; color: #3498db; }
.intro { margin: 38px auto 0; width: 1400px; font-size: 32.700px; line-height: 59px; color: #4a4a4a; }
.intro-sm { margin: 0 auto; width: 1400px; font-size: 28.700px; line-height: 59px; color: #888; }

.features { margin-top: 54px; display: grid; grid-template-columns: repeat(2, 528px); justify-content: center; column-gap: 55px; row-gap: 70px; }
.feature { padding: 71px 40px 42px; background: #f9faff; border-radius: 36px; box-shadow: 0 8px 16px rgba(44, 62, 80, .05); }
.emoji { height: 72px; display: flex; align-items: flex-end; justify-content: center; }
.em-doc { width: 56px; height: 72px; }
.em-person { width: 57px; height: 72px; }
.em-cam { width: 72px; height: 62px; }
.em-bub { width: 70px; height: 54px; margin-bottom: 10px; }
.feature-h { margin-top: 37px; font-size: 34.500px; line-height: 55px; font-weight: 700; color: #2c3e50; }
.feature-p { margin-top: 12px; font-size: 28.800px; line-height: 45.400px; color: #555; }

/* taskbar */
.taskbar { height: 108px; flex: none; background: #1c1c1c; border-top: 2px solid #3a3a3a; display: flex; align-items: center; padding-left: 44px; }
.weather { display: flex; width: 782px; flex: none; align-items: center; gap: 15px; }
.w-icon { position: relative; width: 55px; height: 52px; flex: none; margin-top: 10px; }
.w-svg { width: 55px; height: 52px; }
.w-badge { position: absolute; left: 26px; top: -14px; width: 35px; height: 35px; border-radius: 50%; background: #ff99a4; color: #000; font-size: 24px; display: flex; align-items: center; justify-content: center; }
.w-text { display: flex; flex-direction: column; line-height: 37px; font-size: 26.500px; margin-top: -3px; }
.w-desc { color: #d0d0d0; }
.tile { position: relative; width: 100px; height: 90px; display: flex; align-items: center; justify-content: center; flex: none; }
.win { width: 52px; height: 52px; margin-top: -2px; }
.search { width: 494px; height: 72px; margin-left: 16px; border-radius: 36px; background: #3f3f3f; border: 2px solid #555; display: flex; align-items: center; padding-left: 24px; flex: none; margin-right: 12px; }
.s-mag { width: 34px; height: 34px; flex: none; }
.s-text { margin-left: 24px; font-size: 28px; color: #d8d8d8; }
.s-earth { width: 106px; height: 44px; margin-left: auto; margin-right: 6px; align-self: flex-start; margin-top: 20px; }
.tiles { display: flex; flex: none; }
.t-i { width: 54px; height: 50px; margin-bottom: 6px; }
.t-chrome { height: 54px; }
.t-dot { position: absolute; left: 43px; bottom: 3px; width: 14px; height: 7px; border-radius: 4px; background: #9a9a9a; }
.tile-chrome { background: #2e2e2e; border-radius: 12px; width: 85px; margin: 0 7px 0 8px; }
.tile-tg { background: #7b4449; border-radius: 12px; width: 90px; margin: 0 5px; }
.t-n { position: absolute; left: 46px; top: 6px; width: 34px; height: 34px; border-radius: 50%; background: #00554a; font-size: 18px; color: #ddd; display: flex; align-items: center; justify-content: center; }
.t-ind { position: absolute; left: 26px; bottom: 3px; width: 36px; height: 7px; border-radius: 4px; background: #ff6b6b; }
.tile-tg .t-ind { left: 9px; width: 73px; background: #ff9aa5; }
.t-badge { position: absolute; left: 48px; top: 5px; height: 24px; width: 36px; border-radius: 10px; background: #f03a3a; font-size: 17px; line-height: 24px; color: #fff; text-align: center; }
.tray { display: flex; align-items: center; margin-left: auto; padding-right: 42px; }
.caret { width: 24px; height: 14px; flex: none; margin-right: 48px; }
.lang { display: flex; flex-direction: column; align-items: center; line-height: 37px; font-size: 25.500px; margin-right: 46px; }
.tray-icons { display: flex; gap: 20px; margin-right: 41px; }
.tr-i { width: 32px; height: 32px; }
.tr-batt { margin-left: 5px; }
.clock { display: flex; flex-direction: column; align-items: flex-end; line-height: 37px; font-size: 25.500px; }
```
